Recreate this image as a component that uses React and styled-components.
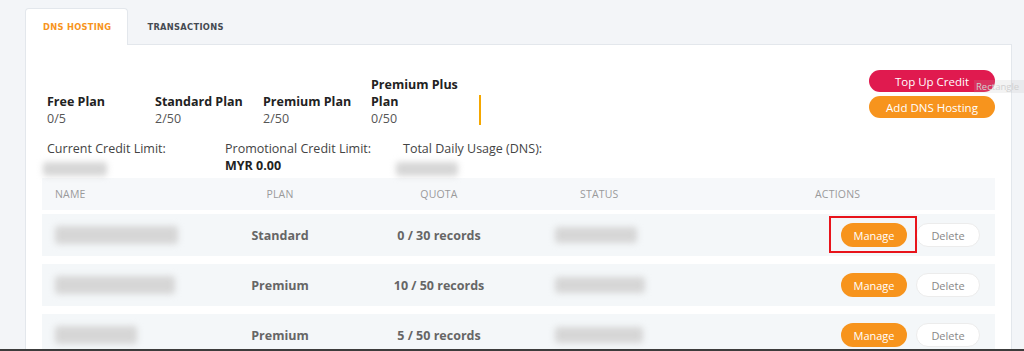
import React from 'react';
import styled, { createGlobalStyle, css } from 'styled-components';

const GlobalStyle = createGlobalStyle`
  html, body {
    margin: 0;
    padding: 0;
    background: #f3f5f8;
    font-family: "Open Sans", "Liberation Sans", sans-serif;
  }
`;

const Page = styled.div`
  position: relative;
  height: 351px;
  overflow: hidden;
  display: flex;
  flex-direction: column;
`;

const Main = styled.div`
  flex: 1;
  overflow: hidden;
  padding: 8px 12px 0 25px;
`;

const BottomEdge = styled.div`
  height: 2px;
  background: #3c3c3c;
`;

const Tabs = styled.div`
  display: flex;
  align-items: stretch;
  height: 37px;
  position: relative;
  z-index: 1;
  margin-bottom: -1px;
`;

const Tab = styled.div`
  display: flex;
  align-items: center;
  padding: 0 ${p => (p.$active ? 16 : 19)}px 0 ${p => (p.$active ? 17 : 19)}px;
  font-family: "DejaVu Sans", "Liberation Sans", sans-serif;
  font-weight: 700;
  font-size: 8.3px;
  letter-spacing: 0.3px;
  color: ${p => (p.$active ? '#f7941d' : '#454a52')};
  ${p =>
    p.$active &&
    css`
      background: #fff;
      border: 1px solid #e3e7ec;
      border-bottom: none;
      border-radius: 4px 4px 0 0;
    `}
`;

const Card = styled.div`
  background: #fff;
  border: 1px solid #e3e7ec;
  border-bottom: none;
  height: 100%;
  padding: 0 16px;
`;

const TopSection = styled.div`
  display: flex;
  justify-content: space-between;
  align-items: flex-start;
  padding: 25px 0 0 5px;
`;

const Summary = styled.div`
  display: flex;
  flex-direction: column;
  padding-top: 6px;
`;

const PlansRow = styled.div`
  display: flex;
  align-items: flex-end;
`;

const PlanItem = styled.div`
  width: 108px;
  padding-right: 8px;
  box-sizing: border-box;
  line-height: 17px;
`;

const PlanTitle = styled.div`
  font-weight: 700;
  font-size: 12.5px;
  color: #222;
`;

const PlanValue = styled.div`
  font-size: 12.5px;
  color: #555;
`;

const Divider = styled.div`
  width: 2px;
  height: 30px;
  margin-bottom: 2px;
  background: #f5a700;
`;

const CreditRow = styled.div`
  display: flex;
  margin-top: 13px;
`;

const CreditItem = styled.div`
  width: 178px;
  line-height: 17px;
  font-size: 12.5px;
  color: #444;
`;

const CreditValue = styled.div`
  font-weight: 700;
  color: #222;
`;

const Blur = styled.div`
  width: ${p => p.$w}px;
  height: ${p => p.$h || 16}px;
  margin-left: ${p => p.$ml || 0}px;
  margin-top: ${p => p.$mt || 0}px;
  background: #d6d6d6;
  filter: blur(3px);
  border-radius: 3px;
`;

const Actions = styled.div`
  display: flex;
  flex-direction: column;
  gap: 4px;
`;

const PillButton = styled.button`
  width: 126px;
  height: 22px;
  border: none;
  border-radius: 11px;
  color: #fff;
  font-family: "Open Sans", "Liberation Sans", sans-serif;
  font-size: 11.5px;
  font-weight: 500;
  padding: 0;
  cursor: pointer;
  background: ${p => p.$color};
`;

const Table = styled.div`
  margin-top: 2px;
  display: flex;
  flex-direction: column;
  gap: 4px;
`;

const Rows = styled.div`
  display: flex;
  flex-direction: column;
  gap: 8px;
`;

const grid = css`
  display: grid;
  grid-template-columns: 175px 100px 218px 1fr 165px;
  align-items: center;
  padding: 0 15px 0 13px;
`;

const HeadRow = styled.div`
  ${grid};
  height: 32px;
  background: #f6f8fa;
  font-size: 10.5px;
  color: #9a9a9a;
  letter-spacing: 0.2px;
`;

const HeadCell = styled.div`
  text-align: ${p => p.$align || 'left'};
  padding-left: ${p => p.$pl || 0}px;
`;

const Row = styled.div`
  ${grid};
  height: 42px;
  background: #f4f7f9;
`;

const Cell = styled.div`
  text-align: center;
  font-weight: 700;
  font-size: 12.5px;
  color: #666;
`;

const ActionCell = styled.div`
  display: flex;
  justify-content: flex-end;
  align-items: center;
  gap: 9px;
`;

const ManageWrap = styled.div`
  position: relative;
  display: flex;
  ${p =>
    p.$highlight &&
    css`
      &::after {
        content: '';
        position: absolute;
        top: -7px;
        bottom: -6px;
        left: -12px;
        right: -10px;
        border: 2px solid #e8141b;
      }
    `}
`;

const SmallButton = styled.button`
  height: 24px;
  border-radius: 12px;
  font-family: "Open Sans", "Liberation Sans", sans-serif;
  font-size: 11px;
  padding: 0;
  cursor: pointer;
  ${p =>
    p.$primary
      ? css`
          width: 66px;
          border: none;
          background: #f7941d;
          color: #fff;
        `
      : css`
          width: 64px;
          border: 1px solid #ececec;
          background: #fff;
          color: #888;
        `}
`;

const Ghost = styled.div`
  position: absolute;
  top: 80px;
  left: 974px;
  width: 50px;
  height: 13px;
  box-sizing: border-box;
  background: rgba(180, 180, 180, 0.16);
  color: #d0d0d0;
  font-size: 9.5px;
  line-height: 13px;
  padding-left: 2px;
  white-space: nowrap;
  font-family: "Open Sans", sans-serif;
`;

const plans = [
  { title: 'Free Plan', value: '0/5' },
  { title: 'Standard Plan', value: '2/50' },
  { title: 'Premium Plan', value: '2/50' },
  { title: 'Premium Plus Plan', value: '0/50' },
];

const domains = [
  { nameW: 123, plan: 'Standard', quota: '0 / 30 records', statusW: 82, highlight: true },
  { nameW: 120, plan: 'Premium', quota: '10 / 50 records', statusW: 90 },
  { nameW: 82, plan: 'Premium', quota: '5 / 50 records', statusW: 88 },
];

export default function App() {
  return (
    <Page>
      <GlobalStyle />
      <Main>
        <Tabs>
          <Tab $active>DNS HOSTING</Tab>
          <Tab>TRANSACTIONS</Tab>
        </Tabs>
        <Card>
          <TopSection>
            <Summary>
              <PlansRow>
                {plans.map(p => (
                  <PlanItem key={p.title}>
                    <PlanTitle>{p.title}</PlanTitle>
                    <PlanValue>{p.value}</PlanValue>
                  </PlanItem>
                ))}
                <Divider />
              </PlansRow>
              <CreditRow>
                <CreditItem>
                  Current Credit Limit:
                  <Blur $w={64} $h={14} $ml={-4} $mt={5} />
                </CreditItem>
                <CreditItem>
                  Promotional Credit Limit:
                  <CreditValue>MYR 0.00</CreditValue>
                </CreditItem>
                <CreditItem>
                  Total Daily Usage (DNS):
                  <Blur $w={62} $h={14} $ml={-7} $mt={5} />
                </CreditItem>
              </CreditRow>
            </Summary>
            <Actions>
              <PillButton $color="#e01a4f">Top Up Credit</PillButton>
              <PillButton $color="#f7941d">Add DNS Hosting</PillButton>
            </Actions>
          </TopSection>
          <Table>
            <HeadRow>
              <HeadCell>NAME</HeadCell>
              <HeadCell $align="center">PLAN</HeadCell>
              <HeadCell $align="center">QUOTA</HeadCell>
              <HeadCell $pl={32}>STATUS</HeadCell>
              <HeadCell>ACTIONS</HeadCell>
            </HeadRow>
            <Rows>
              {domains.map((d, i) => (
                <Row key={i}>
                  <Blur $w={d.nameW} $h={18} />
                  <Cell>{d.plan}</Cell>
                  <Cell>{d.quota}</Cell>
                  <Blur $w={d.statusW} $h={16} $ml={7} />
                  <ActionCell>
                    <ManageWrap $highlight={d.highlight}>
                      <SmallButton $primary>Manage</SmallButton>
                    </ManageWrap>
                    <SmallButton>Delete</SmallButton>
                  </ActionCell>
                </Row>
              ))}
            </Rows>
          </Table>
        </Card>
      </Main>
      <BottomEdge />
      <Ghost>Rectangle</Ghost>
    </Page>
  );
}
